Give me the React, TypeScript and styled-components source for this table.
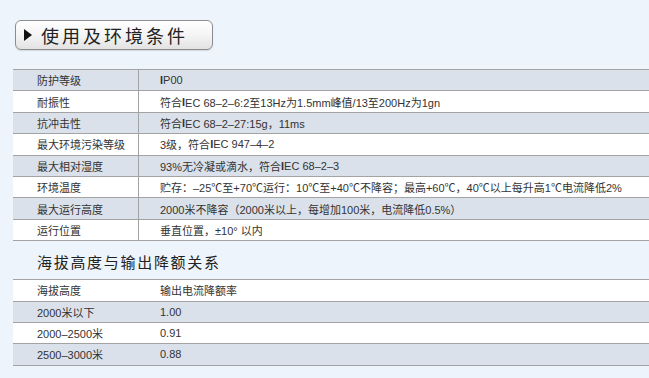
import React from 'react'
import styled, { createGlobalStyle } from 'styled-components'

const GlobalStyle = createGlobalStyle`
  html, body {
    margin: 0;
    padding: 0;
    background: #edf4fb;
    overflow: hidden;
  }
  body {
    font-family: "Liberation Sans", "Noto Sans CJK SC", sans-serif;
    color: #333;
  }
`

const Page = styled.div`
  width: 649px;
  height: 378px;
  padding-top: 20px;
  box-sizing: border-box;
`

const TitleButton = styled.div`
  display: flex;
  align-items: center;
  gap: 9px;
  margin-left: 15px;
  width: 198px;
  height: 30px;
  box-sizing: border-box;
  padding-left: 8px;
  border: 1px solid #8d8d8d;
  border-radius: 6px;
  background: linear-gradient(#ffffff, #f3f3f3 55%, #e2e2e2);
  box-shadow: 0 1px 1px rgba(0, 0, 0, 0.12);
`

const Arrow = styled.span`
  width: 0;
  height: 0;
  border-top: 6px solid transparent;
  border-bottom: 6px solid transparent;
  border-left: 8px solid #111;
`

const TitleText = styled.span`
  font-family: "Noto Sans CJK SC", sans-serif;
  font-size: 18px;
  letter-spacing: 3px;
  color: #222;
  line-height: 1;
`

const Table = styled.div<{ $top: number }>`
  margin-left: 13px;
  margin-top: ${(p) => p.$top}px;
  width: 636px;
  border-top: 1px solid #a3a3a3;
`

const Row = styled.div<{ $shade: boolean }>`
  display: grid;
  grid-template-columns: 125px 1fr;
  height: 21.4px;
  box-sizing: border-box;
  border-bottom: 1px solid #a3a3a3;
  background: ${(p) => (p.$shade ? '#dae1ea' : '#ffffff')};
  font-size: 11px;
  align-items: center;
`

const Label = styled.div`
  padding-left: 24px;
  white-space: nowrap;
  height: 100%;
  display: flex;
  align-items: center;
`

const Value = styled.div<{ $divider: boolean }>`
  padding-left: ${(p) => (p.$divider ? 21 : 22)}px;
  white-space: nowrap;
  height: 100%;
  display: flex;
  align-items: center;
  border-left: ${(p) => (p.$divider ? '1px solid #a3a3a3' : 'none')};
`

const SubHeading = styled.div`
  margin: 13px 0 0 37px;
  font-family: "Noto Sans CJK SC", sans-serif;
  font-size: 15px;
  letter-spacing: 1.7px;
  color: #222;
  line-height: 1;
`

const B = styled.b`
  font-weight: 900;
`

const conditions: [string, React.ReactNode][] = [
  ['防护等级', <><B>I</B>P00</>],
  ['耐振性', <>符合<B>I</B>EC 68–2–6:2至13Hz为1.5mm峰值/13至200Hz为1gn</>],
  ['抗冲击性', <>符合<B>I</B>EC 68–2–27:15g，11ms</>],
  ['最大环境污染等级', <>3级，符合<B>I</B>EC 947–4–2</>],
  ['最大相对湿度', <>93%无冷凝或滴水，符合<B>I</B>EC 68–2–3</>],
  ['环境温度', '贮存：–25℃至+70℃运行：10℃至+40℃不降容；最高+60℃，40℃以上每升高1℃电流降低2%'],
  ['最大运行高度', '2000米不降容（2000米以上，每增加100米，电流降低0.5%）'],
  ['运行位置', '垂直位置，±10° 以内'],
]

const derating: [string, string][] = [
  ['海拔高度', '输出电流降额率'],
  ['2000米以下', '1.00'],
  ['2000–2500米', '0.91'],
  ['2500–3000米', '0.88'],
]

export default function App() {
  return (
    <Page>
      <GlobalStyle />
      <TitleButton>
        <Arrow />
        <TitleText>使用及环境条件</TitleText>
      </TitleButton>
      <Table $top={19}>
        {conditions.map(([label, value], i) => (
          <Row key={label} $shade={i % 2 === 0}>
            <Label>{label}</Label>
            <Value $divider>{value}</Value>
          </Row>
        ))}
      </Table>
      <SubHeading>海拔高度与输出降额关系</SubHeading>
      <Table $top={10}>
        {derating.map(([label, value], i) => (
          <Row key={label} $shade={i % 2 === 1}>
            <Label>{label}</Label>
            <Value $divider={false}>{value}</Value>
          </Row>
        ))}
      </Table>
    </Page>
  )
}
